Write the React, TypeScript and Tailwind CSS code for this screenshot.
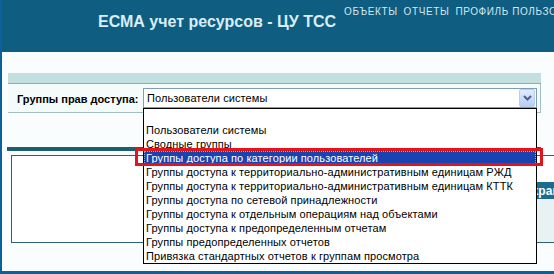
const groups = [
  "Пользователи системы",
  "Сводные группы",
  "Группы доступа по категории пользователей",
  "Группы доступа к территориально-административным единицам РЖД",
  "Группы доступа к территориально-административным единицам КТТК",
  "Группы доступа по сетевой принадлежности",
  "Группы доступа к отдельным операциям над объектами",
  "Группы доступа к предопределенным отчетам",
  "Группы предопределенных отчетов",
  "Привязка стандартных отчетов к группам просмотра",
];

const selected = 2;

export default function App() {
  return (
    <div className="relative h-[274px] w-[554px] overflow-hidden border-b-[3px] border-l-2 border-[#0b619a] bg-[#f9fdfd] font-['Liberation_Sans',Arial,sans-serif] text-black">
      {/* шапка */}
      <div className="flex h-[52px] bg-[#0f5d80]">
        <h1 className="ml-[96px] mt-[14px] shrink-0 whitespace-nowrap text-[16px] font-bold leading-none text-[#d8eef8]">
          ЕСМА учет ресурсов - ЦУ ТСС
        </h1>
        <nav className="ml-[8px] mt-[7px] flex shrink-0 gap-[6px] whitespace-nowrap text-[10px] leading-none tracking-[0.6px] text-[#cfe8f3]">
          <span>ОБЪЕКТЫ</span>
          <span>ОТЧЕТЫ</span>
          <span>ПРОФИЛЬ ПОЛЬЗОВАТЕЛЯ</span>
        </nav>
      </div>

      <div className="pl-[6px] pr-[13px] pt-[21px]">
        <div className="h-[11px] border-b border-[#8eaeb0] bg-[#c3dfe0]" />
        <div className="flex h-[29px] items-start border-b border-r border-[#9fbfc2] bg-[#f3fbfb] pl-[9px] pt-[4px]">
          <label className="mt-[6px] w-[126px] shrink-0 whitespace-nowrap text-[11px] font-bold leading-none">
            Группы прав доступа:
          </label>
          <div className="flex h-[20px] w-[394px] shrink-0 items-center border border-[#7f9db9] bg-white pl-[3px]">
            <span className="flex-1 text-[11px] leading-none tracking-[0.1px]">Пользователи системы</span>
            <div className="mr-px flex h-[18px] w-[16px] items-center justify-center rounded-[2px] border border-[#b9cdf2] bg-gradient-to-b from-[#e2ecfe] to-[#b8cdf6]">
              <svg width="9" height="6" viewBox="0 0 9 6">
                <path d="M1 1 L4.5 4.5 L8 1" fill="none" stroke="#4d6185" strokeWidth="2" />
              </svg>
            </div>
          </div>
        </div>

        <div className="ml-[-1px] mt-[34px] h-[4px] bg-[#1d5f70]" />
        <div className="ml-[3px] mt-[4px] flex h-[88px] w-[600px] border border-[#2e6272] bg-white">
          <div className="flex-1" />
          <div className="flex w-[110px] flex-col pt-[26px]">
            <div className="flex h-[17px] items-center bg-[#1a6d8e] pl-[16px] text-[12px] font-bold text-white">
              Сохранить
            </div>
            <div className="flex-1 bg-[#e8f2f5]" />
          </div>
        </div>
      </div>

      {/* раскрытый список */}
      <div className="absolute left-[141px] top-[108px] h-[156px] w-[394px] border border-black bg-white text-[11px] leading-[15px] tracking-[0.1px]">
        <div className="h-[14px]" />
        {groups.map((g, i) => (
          <div
            key={g}
            className={
              i === selected
                ? "h-[14px] whitespace-nowrap bg-[#1a43b2] pl-[2px] text-white outline-1 -outline-offset-1 outline-dotted outline-[#8da4e0]"
                : "h-[14px] whitespace-nowrap pl-[2px]"
            }
          >
            {g}
          </div>
        ))}
      </div>

      {/* красная рамка */}
      <div className="absolute left-[133px] top-[148px] h-[18px] w-[408px] border-[3px] border-[#e3141c]" />
    </div>
  );
}
